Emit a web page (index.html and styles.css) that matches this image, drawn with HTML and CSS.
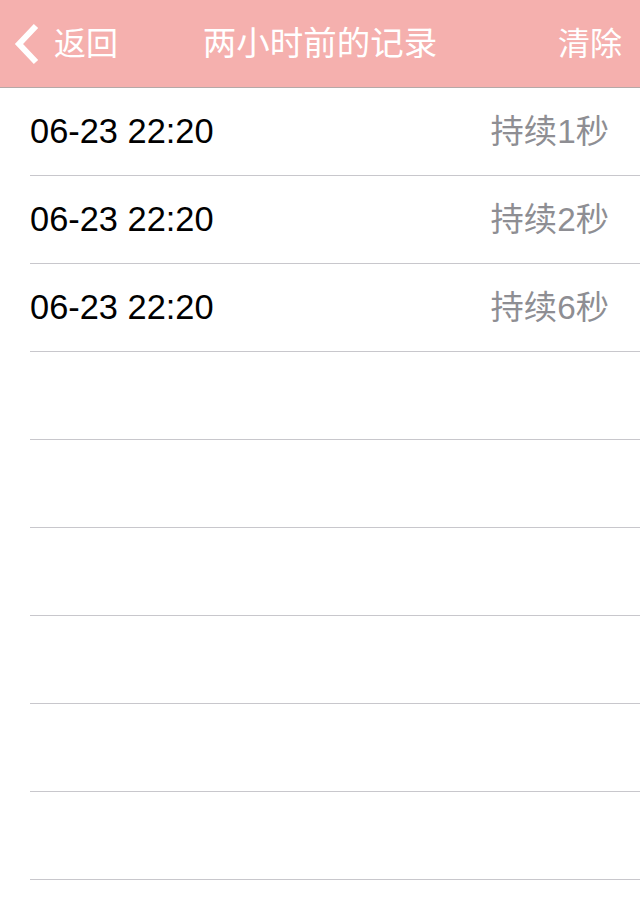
FILE: index.html
```html
<!DOCTYPE html>
<html lang="zh-CN">
<head>
<meta charset="utf-8">
<title>两小时前的记录</title>
<link rel="stylesheet" href="styles.css">
</head>
<body>
<header class="navbar">
  <div class="nav-left">
    <svg class="chevron" width="26" height="42" viewBox="0 0 26 42" aria-hidden="true">
      <polyline points="22,3 5,21 22,39" fill="none" stroke="#ffffff" stroke-width="6" stroke-linecap="butt" stroke-linejoin="miter"/>
    </svg>
    <span class="nav-back">返回</span>
  </div>
  <div class="nav-title">两小时前的记录</div>
  <div class="nav-right">清除</div>
</header>
<main class="list">
  <div class="row"><span class="time">06-23 22:20</span><span class="dur">持续1秒</span></div>
  <div class="row"><span class="time">06-23 22:20</span><span class="dur">持续2秒</span></div>
  <div class="row"><span class="time">06-23 22:20</span><span class="dur">持续6秒</span></div>
  <div class="row"></div>
  <div class="row"></div>
  <div class="row"></div>
  <div class="row"></div>
  <div class="row"></div>
  <div class="row"></div>
</main>
</body>
</html>
```
FILE: styles.css
```css
html, body {
  margin: 0;
  padding: 0;
  background: #ffffff;
}
body {
  font-family: "Liberation Sans", "Noto Sans CJK SC", sans-serif;
  width: 640px;
  min-height: 920px;
}
.navbar {
  height: 87px;
  background: #f5b0ae;
  border-bottom: 1px solid #b5a9a8;
  display: grid;
  grid-template-columns: 1fr auto 1fr;
  align-items: center;
  color: #ffffff;
}
.nav-left {
  display: flex;
  align-items: center;
  padding-left: 14px;
  gap: 14px;
}
.chevron {
  display: block;
  margin-top: 1px;
}
.nav-back {
  font-size: 32px;
  line-height: 1;
}
.nav-title {
  font-size: 33.5px;
  line-height: 1;
}
.nav-right {
  justify-self: end;
  padding-right: 18px;
  font-size: 32px;
  line-height: 1;
}
.list {
  display: flex;
  flex-direction: column;
}
.row {
  height: 87px;
  margin-left: 30px;
  padding-right: 31px;
  border-bottom: 1px solid #c8c7cc;
  display: flex;
  align-items: center;
  justify-content: space-between;
  flex-shrink: 0;
}
.time {
  font-size: 34.4px;
  color: #000000;
  line-height: 1;
}
.dur {
  font-size: 33.3px;
  color: #8e8e93;
  line-height: 1;
}
```
